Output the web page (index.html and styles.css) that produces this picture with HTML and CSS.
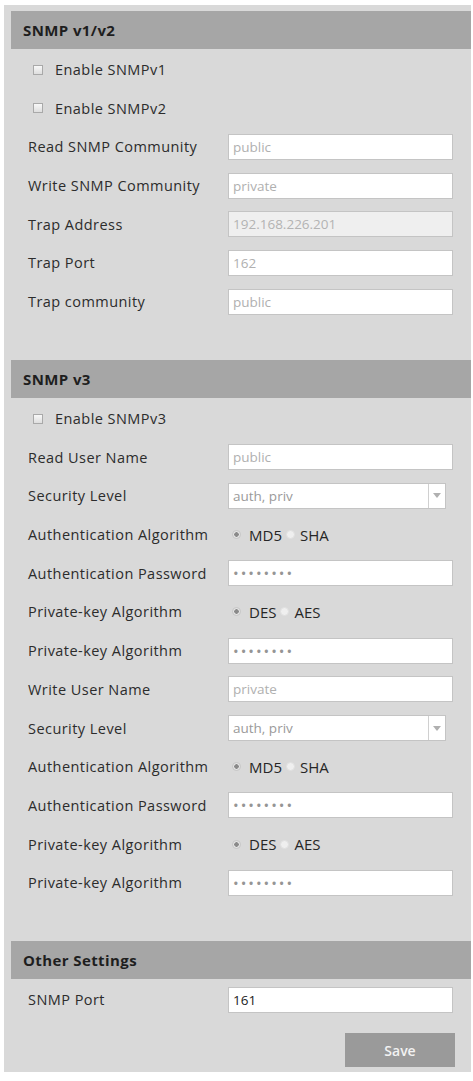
FILE: index.html
```html
<!DOCTYPE html>
<html lang="en">
<head>
    <meta charset="UTF-8">
    <meta name="viewport" content="width=device-width, initial-scale=1.0">
    <title>SNMP</title>
    <link rel="stylesheet" href="styles.css">
</head>
<body>
    <div class="panel"> <!-- main settings panel -->

        <div class="section"> <!-- SNMP v1/v2 -->
            <div class="section-title">SNMP v1/v2</div>
            <div class="row check-row"><input type="checkbox" class="check" id="v1"><label for="v1">Enable SNMPv1</label></div>
            <div class="row check-row"><input type="checkbox" class="check" id="v2"><label for="v2">Enable SNMPv2</label></div>
            <div class="row"><span class="label">Read SNMP Community</span><input type="text" class="field" placeholder="public"></div>
            <div class="row"><span class="label">Write SNMP Community</span><input type="text" class="field" placeholder="private"></div>
            <div class="row"><span class="label">Trap Address</span><input type="text" class="field" value="192.168.226.201" disabled></div>
            <div class="row"><span class="label">Trap Port</span><input type="text" class="field" placeholder="162"></div>
            <div class="row"><span class="label">Trap community</span><input type="text" class="field" placeholder="public"></div>
        </div>

        <div class="section"> <!-- SNMP v3 -->
            <div class="section-title">SNMP v3</div>
            <div class="row check-row"><input type="checkbox" class="check" id="v3"><label for="v3">Enable SNMPv3</label></div>
            <div class="row"><span class="label">Read User Name</span><input type="text" class="field" placeholder="public"></div>
            <div class="row"><span class="label">Security Level</span>
                <div class="select"><span class="select-text">auth, priv</span><span class="select-arrow"><svg width="8" height="5" viewBox="0 0 8 5"><path d="M0 0h8L4 5z" fill="#b0b0b0"/></svg></span></div>
            </div>
            <div class="row"><span class="label">Authentication Algorithm</span>
                <div class="radios"><input type="radio" class="radio" name="a1" checked><span>MD5</span><input type="radio" class="radio" name="a1"><span>SHA</span></div>
            </div>
            <div class="row"><span class="label">Authentication Password</span><input type="password" class="field pass" value="12345678"></div>
            <div class="row"><span class="label">Private-key Algorithm</span>
                <div class="radios"><input type="radio" class="radio" name="p1" checked><span>DES</span><input type="radio" class="radio" name="p1"><span>AES</span></div>
            </div>
            <div class="row"><span class="label">Private-key Algorithm</span><input type="password" class="field pass" value="12345678"></div>
            <div class="row"><span class="label">Write User Name</span><input type="text" class="field" placeholder="private"></div>
            <div class="row"><span class="label">Security Level</span>
                <div class="select"><span class="select-text">auth, priv</span><span class="select-arrow"><svg width="8" height="5" viewBox="0 0 8 5"><path d="M0 0h8L4 5z" fill="#b0b0b0"/></svg></span></div>
            </div>
            <div class="row"><span class="label">Authentication Algorithm</span>
                <div class="radios"><input type="radio" class="radio" name="a2" checked><span>MD5</span><input type="radio" class="radio" name="a2"><span>SHA</span></div>
            </div>
            <div class="row"><span class="label">Authentication Password</span><input type="password" class="field pass" value="12345678"></div>
            <div class="row"><span class="label">Private-key Algorithm</span>
                <div class="radios"><input type="radio" class="radio" name="p2" checked><span>DES</span><input type="radio" class="radio" name="p2"><span>AES</span></div>
            </div>
            <div class="row"><span class="label">Private-key Algorithm</span><input type="password" class="field pass" value="12345678"></div>
        </div>

        <div class="section last"> <!-- other settings -->
            <div class="section-title">Other Settings</div>
            <div class="row"><span class="label">SNMP Port</span><input type="text" class="field dark" value="161"></div>
        </div>

        <div class="actions">
            <button class="save">Save</button>
        </div>
    </div>
</body>
</html>
```
FILE: styles.css
```css
body {
    margin: 0;
    background-color: #ffffff;
    font-family: "Open Sans", Arial, sans-serif;
    font-size: 14.5px;
    color: #2c2c2c;
}
.panel {
    width: 467px; /* grey settings box */
    margin: 5px 0 0 4px;
    padding: 6px 0 5px 7px;
    box-sizing: border-box;
    background-color: #d9d9d9;
}
.section {
    padding-bottom: 39px;
}
.section.last {
    padding-bottom: 0;
}
.section-title {
    height: 38px;
    line-height: 38px;
    padding-left: 12px;
    background-color: #a6a6a6;
    font-weight: bold;
    font-size: 15px;
    letter-spacing: 0.4px;
    color: #1e1e1e;
}
.row {
    height: 38.7px;
    display: flex;
    align-items: center;
    padding-left: 17px;
}
.section-title + .row {
    margin-top: 1.2px;
}
.label {
    width: 200px;
    flex-shrink: 0;
    letter-spacing: 0.45px;
}
.check-row label {
    letter-spacing: 0.45px;
}
.check {
    appearance: none;
    width: 10px;
    height: 10px;
    margin: 0 12px 0 5px;
    border: 1px solid #a9a9a9;
    background: linear-gradient(#f8f8f8, #dedede);
    box-sizing: border-box;
}
.field {
    width: 225px;
    height: 26px;
    box-sizing: border-box;
    border: 1px solid #c4c4c4;
    background-color: #ffffff;
    padding: 0 4px;
    font-family: "Open Sans", Arial, sans-serif;
    font-size: 13.5px;
    color: #a8a8a8;
    outline: none;
}
.field::placeholder {
    color: #b0b0b0;
}
.field:disabled {
    background-color: #efefef;
    color: #b3b3b3;
}
.field.dark {
    color: #222;
}
.field.pass {
    color: #959595;
    letter-spacing: 2px;
    font-size: 15px;
}
.select {
    width: 218px;
    height: 26px;
    box-sizing: border-box;
    border: 1px solid #c4c4c4;
    background-color: #ffffff;
    display: flex;
    align-items: center;
}
.select-text {
    flex: 1;
    padding-left: 4px;
    font-size: 13.5px;
    color: #9a9a9a;
}
.select-arrow {
    width: 16px;
    height: 24px;
    border-left: 1px solid #d0d0d0;
    display: flex;
    align-items: center;
    justify-content: center;
}
.radios {
    display: flex;
    align-items: center;
    font-size: 15px;
    color: #262626;
    margin-left: 4px;
}
.radio {
    appearance: none;
    width: 9px;
    height: 9px;
    border-radius: 50%;
    margin: 0 8px 0 0;
    background-color: #e6e6e6;
    border: 1px solid #c6c6c6;
    box-sizing: border-box;
}
.radio:checked {
    background: radial-gradient(circle, #8a8a8a 0 2px, #e4e4e4 2.5px);
}
.radios span + .radio {
    margin-left: 4px;
    margin-right: 5px;
    background-color: #efefef;
    border-color: #e0e0e0;
}
.actions {
    display: flex;
    justify-content: flex-end;
    padding: 14px 16px 0 0;
}
.save {
    width: 110px;
    height: 34px;
    border: none;
    background-color: #9a9a9a;
    color: #f2f2f2;
    font-family: "Open Sans", Arial, sans-serif;
    font-size: 14px;
    font-weight: 600;
}
```
